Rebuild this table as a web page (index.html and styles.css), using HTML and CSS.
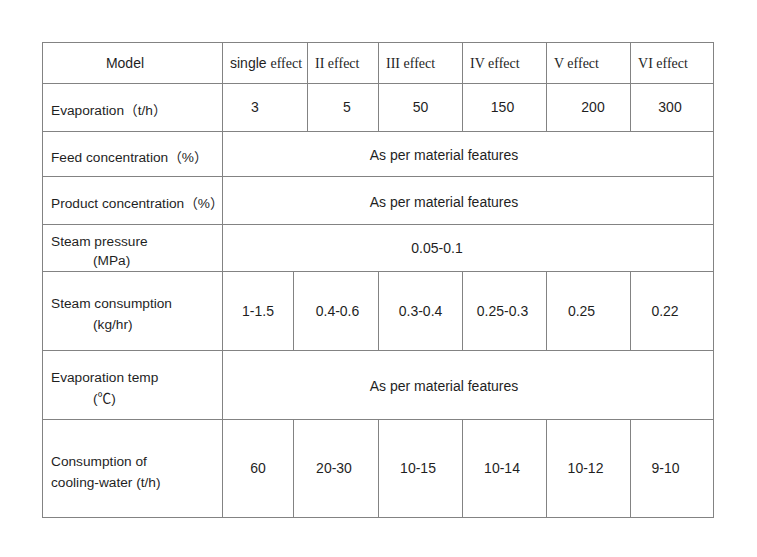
FILE: index.html
```html
<!DOCTYPE html>
<html lang="en">
<head>
<meta charset="utf-8">
<title>Evaporator specifications</title>
<link rel="stylesheet" href="styles.css">
</head>
<body>
<table class="spec">
  <colgroup>
    <col class="c1"><col class="c2"><col class="c3"><col class="c4"><col class="c5"><col class="c6"><col class="c7"><col class="c8">
  </colgroup>
  <tr class="r-head">
    <td class="model">Model</td>
    <td class="hd" colspan="2">single <span class="serif">effect</span></td>
    <td class="hd serif">II effect</td>
    <td class="hd serif">III effect</td>
    <td class="hd serif">IV effect</td>
    <td class="hd serif">V effect</td>
    <td class="hd serif">VI effect</td>
  </tr>
  <tr class="r-evap">
    <td class="label">Evaporation（t/h）</td>
    <td class="val sh-l20" colspan="2">3</td>
    <td class="val sh-r8">5</td>
    <td class="val">50</td>
    <td class="val sh-l4">150</td>
    <td class="val sh-r9">200</td>
    <td class="val sh-l4">300</td>
  </tr>
  <tr class="r-feed">
    <td class="label">Feed concentration（%）</td>
    <td class="merged" colspan="7">As per material features</td>
  </tr>
  <tr class="r-prod">
    <td class="label">Product concentration（%）</td>
    <td class="merged" colspan="7">As per material features</td>
  </tr>
  <tr class="r-press">
    <td class="label"><div>Steam pressure</div><div class="indent">(MPa)</div></td>
    <td class="merged press" colspan="7">0.05-0.1</td>
  </tr>
  <tr class="r-cons">
    <td class="label"><div>Steam consumption</div><div class="indent">(kg/hr)</div></td>
    <td class="val">1-1.5</td>
    <td class="val sh-r3" colspan="2">0.4-0.6</td>
    <td class="val">0.3-0.4</td>
    <td class="val sh-l4">0.25-0.3</td>
    <td class="val sh-l14">0.25</td>
    <td class="val sh-l14">0.22</td>
  </tr>
  <tr class="r-temp">
    <td class="label"><div>Evaporation temp</div><div class="indent">(℃)</div></td>
    <td class="merged" colspan="7">As per material features</td>
  </tr>
  <tr class="r-cool">
    <td class="label"><div>Consumption of</div><div>cooling-water (t/h)</div></td>
    <td class="val">60</td>
    <td class="val sh-l4" colspan="2">20-30</td>
    <td class="val sh-l5">10-15</td>
    <td class="val sh-l5">10-14</td>
    <td class="val sh-l6">10-12</td>
    <td class="val sh-l13">9-10</td>
  </tr>
</table>
</body>
</html>
```
FILE: styles.css
```css
html, body {
  margin: 0;
  padding: 0;
  background: #ffffff;
}

body {
  font-family: "Liberation Sans", Arial, "Noto Sans CJK SC", "DejaVu Sans", sans-serif;
  font-size: 14px;
  color: #1f1f1f;
}

.spec {
  margin: 42px 0 0 42px;
  border-collapse: collapse;
  table-layout: fixed;
  width: 672px;
}

.c1 { width: 180px; }
.c2 { width: 71px; }
.c3 { width: 14px; }
.c4 { width: 71px; }
.c5 { width: 84px; }
.c6 { width: 84px; }
.c7 { width: 84px; }
.c8 { width: 83px; }

.spec td {
  box-sizing: border-box;
  border: 1px solid #838383;
  padding: 0;
  vertical-align: middle;
  line-height: 21px;
}

.r-head td { height: 41px; }
.r-evap td { height: 48px; }
.r-feed td { height: 45px; }
.r-prod td { height: 48px; }
.r-press td { height: 47px; line-height: 19px; }
.r-cons td { height: 79px; }
.r-temp td { height: 69px; }
.r-cool td { height: 98px; }

.model {
  text-align: center;
  padding-right: 15px !important;
}

.hd {
  text-align: left;
  padding-left: 7px !important;
  white-space: nowrap;
}

.serif {
  font-family: "Liberation Serif", "Times New Roman", serif;
  font-size: 14px;
}

.label {
  font-size: 13.7px;
  padding-left: 8px !important;
  padding-top: 6px !important;
  white-space: nowrap;
  overflow: visible;
}

.label .indent {
  padding-left: 42px;
}

.val {
  text-align: center;
}

.merged {
  text-align: center;
  padding-right: 48px !important;
  padding-top: 3px !important;
}

.merged.press {
  padding-right: 62px !important;
  padding-top: 0 !important;
}

.sh-l20 { padding-right: 20px !important; }
.sh-l4 { padding-right: 4px !important; }
.sh-l5 { padding-right: 5px !important; }
.sh-l6 { padding-right: 6px !important; }
.sh-l13 { padding-right: 13px !important; }
.sh-l14 { padding-right: 14px !important; }
.sh-r3 { padding-left: 3px !important; }
.sh-r8 { padding-left: 8px !important; }
.sh-r9 { padding-left: 9px !important; }
```
